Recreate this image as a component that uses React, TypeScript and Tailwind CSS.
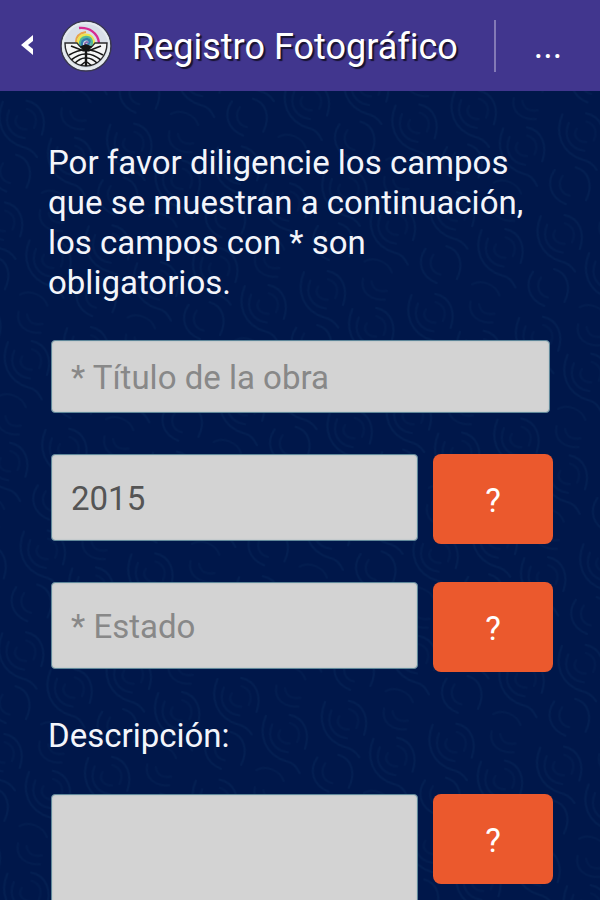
import { useState } from "react";

const fieldClass =
  "min-w-0 rounded-[4px] border border-[#5f8799] bg-[#d3d3d3] px-[19px] pt-[2px] text-[33px] text-[#555555] shadow-[inset_0_0_2px_#a9bcc2] placeholder:text-[#888888] outline-none";

function Logo() {
  return (
    <svg viewBox="0 0 52 52" className="size-[52px] shrink-0" aria-hidden="true">
      <defs>
        <clipPath id="bowl">
          <path d="M5 23 H47 C47 36 38 46 26 46 C14 46 5 36 5 23 Z" />
        </clipPath>
      </defs>
      <circle cx="26" cy="26" r="25" fill="#d9dfe8" stroke="#3a3850" strokeWidth="1.5" />
      <circle cx="26" cy="26" r="23" fill="none" stroke="#e6ebee" strokeWidth="2" />
      <g fill="none">
        <path d="M19 8 C29 7 38 13 39 23" stroke="#d72a91" strokeWidth="2.4" />
        <path d="M16 22 C16 16 20 13 26 12" stroke="#e9a24c" strokeWidth="2" />
        <path d="M18 25 C18 18 21 15 26 15 C31 15 34 19 34 25" stroke="#ece44f" strokeWidth="3" />
        <path d="M20 26 C20 20 22 17 26 17 C31 17 33 21 31 26" stroke="#52b999" strokeWidth="2.5" />
        <path d="M22 27 C21 22 23 19 27 19 C31 20 30 24 27 25" stroke="#317cae" strokeWidth="2.4" />
        <path d="M25 26 C24 22 28 21 28 23" stroke="#8c6bb0" strokeWidth="1.8" />
      </g>
      <path
        d="M5 23 H17 C18 24 19 26 21 27 L26 25 L31 27 C33 26 34 24 35 23 H47 C47 36 38 46 26 46 C14 46 5 36 5 23 Z"
        fill="#f4f5f5"
        stroke="#2a2a2a"
        strokeWidth="1.4"
      />
      <g clipPath="url(#bowl)" fill="none" stroke="#151515" strokeWidth="1.6">
        <path d="M26 25 V46" strokeWidth="2.4" />
        <path d="M21 27 L26 25 L31 27 L27 31 H25 Z" fill="#151515" />
        <path d="M11 26 L24 31" />
        <path d="M41 26 L28 31" />
        <path d="M25 30 C20 30 14 32 9 35" />
        <path d="M27 30 C32 30 38 32 43 35" />
        <path d="M25 34 C21 34 15 37 11 40" />
        <path d="M27 34 C31 34 37 37 41 40" />
        <path d="M25 38 C22 38 17 41 14 44" />
        <path d="M27 38 C30 38 35 41 38 44" />
        <path d="M25 42 L20 46 M27 42 L32 46" />
      </g>
    </svg>
  );
}

// Faint embossed swirls behind the form
function Swirls() {
  return (
    <svg className="absolute inset-0 -z-10 size-full" aria-hidden="true">
      <defs>
        <pattern id="swirls" width="110" height="104" patternUnits="userSpaceOnUse" patternTransform="rotate(12)">
          <g fill="none" stroke="#0a3163" strokeLinecap="round" strokeWidth="2" opacity="0.3">
            <path d="M5 10 C1 30 12 48 34 50 C42 50 46 53 50 57" />
            <path d="M13 17 C10 32 20 42 34 41" opacity="0.8" />
            <path d="M22 21 C19 29 26 34 34 32" opacity="0.6" />
            <path d="M28 4 C44 4 52 18 50 34" />
            <path d="M30 12 C40 13 43 21 41 29" opacity="0.6" />

            <path d="M60 36 C56 56 67 74 89 76 C97 76 101 80 105 85" />
            <path d="M68 43 C65 58 75 68 89 67" opacity="0.8" />
            <path d="M77 47 C74 55 81 60 89 58" opacity="0.6" />
            <path d="M83 30 C99 30 107 44 105 60" />
            <path d="M85 38 C95 39 98 47 96 55" opacity="0.6" />

            <path d="M9 66 C3 80 10 94 27 97" />
            <path d="M18 70 C14 80 20 88 29 88" opacity="0.7" />
            <path d="M29 59 C43 60 50 73 46 89" />
            <path d="M64 4 C64 18 76 24 90 20" opacity="0.7" />
            <path d="M73 5 C76 13 83 14 90 11" opacity="0.6" />
            <path d="M62 91 C70 84 85 86 91 96" opacity="0.7" />
          </g>
        </pattern>
      </defs>
      <rect width="100%" height="100%" fill="url(#swirls)" />
    </svg>
  );
}

function HelpButton({ label }: { label: string }) {
  return (
    <button
      type="button"
      aria-label={label}
      className="h-[90px] w-[120px] shrink-0 rounded-[8px] bg-[#eb592d] pt-1 text-[33px] leading-10 text-white"
    >
      ?
    </button>
  );
}

export default function App() {
  const [titulo, setTitulo] = useState("");
  const [fecha, setFecha] = useState("2015");
  const [estado, setEstado] = useState("");
  const [descripcion, setDescripcion] = useState("");

  return (
    <div className="flex h-screen flex-col overflow-hidden bg-[#00174a] font-['Roboto',sans-serif] text-[33px] leading-10 text-[#f3f5fb]">
      <header className="flex h-[91px] shrink-0 items-center bg-[#41368e] pl-5">
        <button type="button" aria-label="Volver" className="flex h-[52px] w-10 shrink-0 items-center">
          <svg viewBox="0 0 16 24" className="h-6 w-4" aria-hidden="true">
            <path d="M13 1 V7 L8 11 L13 15 V21 L1 11 Z" fill="#ffffff" />
          </svg>
        </button>
        <Logo />
        <h1 className="ml-5 grow whitespace-nowrap pt-[2px] text-[36px] text-white [font-variant-ligatures:none] [text-shadow:2px_2px_1px_#171330]">
          Registro Fotográfico
        </h1>
        <button
          type="button"
          aria-label="Más opciones"
          className="flex h-[52px] w-[106px] shrink-0 items-center justify-center border-l-2 border-[#837ab6] text-[36px] text-white"
        >
          ...
        </button>
      </header>

      <main className="relative isolate grow overflow-hidden pt-[52px] pr-[47px] pl-12">
        <Swirls />
        <p>
          Por favor diligencie los campos que se muestran a continuación, los campos con * son obligatorios.
        </p>

        <form>
          <div className="mx-[3px] mt-[37px] flex">
            <input
              type="text"
              aria-label="Título de la obra"
              placeholder="* Título de la obra"
              value={titulo}
              onChange={(e) => setTitulo(e.target.value)}
              className={`${fieldClass} h-[73px] grow`}
            />
          </div>

          <div className="mt-[41px] ml-[3px] flex items-start gap-[15px]">
            <input
              type="text"
              aria-label="Año"
              value={fecha}
              onChange={(e) => setFecha(e.target.value)}
              className={`${fieldClass} h-[87px] grow`}
            />
            <HelpButton label="Ayuda sobre el año" />
          </div>

          <div className="mt-[38px] ml-[3px] flex items-start gap-[15px]">
            <input
              type="text"
              aria-label="Estado"
              placeholder="* Estado"
              value={estado}
              onChange={(e) => setEstado(e.target.value)}
              className={`${fieldClass} h-[87px] grow`}
            />
            <HelpButton label="Ayuda sobre el estado" />
          </div>

          <label htmlFor="descripcion" className="mt-11 block">
            Descripción:
          </label>
          <div className="mt-[38px] ml-[3px] flex items-start gap-[15px]">
            <textarea
              id="descripcion"
              value={descripcion}
              onChange={(e) => setDescripcion(e.target.value)}
              className={`${fieldClass} h-[180px] grow resize-none`}
            />
            <HelpButton label="Ayuda sobre la descripción" />
          </div>
        </form>
      </main>
    </div>
  );
}
